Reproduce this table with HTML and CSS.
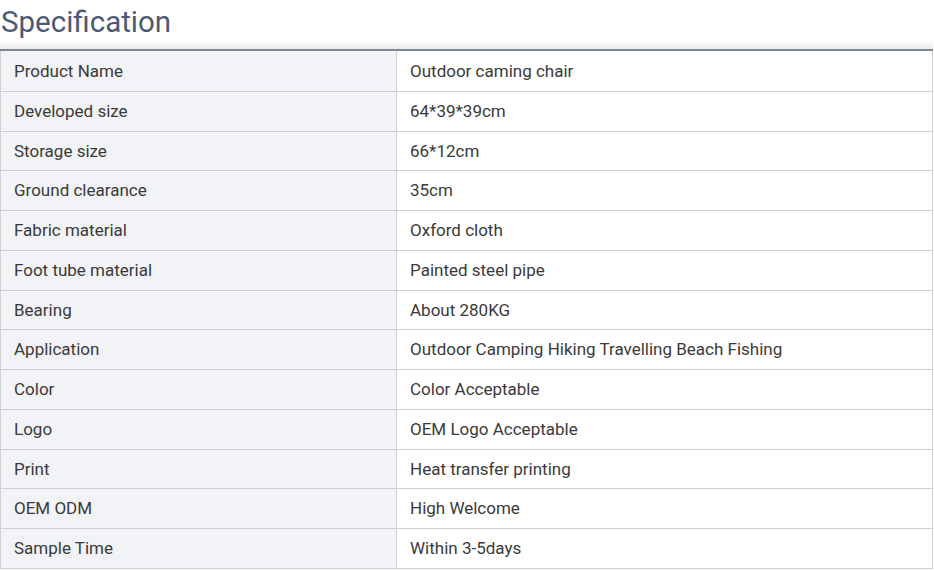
FILE: index.html
```html
<!DOCTYPE html>
<html>
<head>
<meta charset="utf-8">
<link rel="stylesheet" href="styles.css">
</head>
<body>
<div class="spec">
  <h2 class="spec-title">Specification</h2>
  <table class="spec-table">
    <tr><td class="k">Product Name</td><td class="v">Outdoor caming chair</td></tr>
    <tr><td class="k">Developed size</td><td class="v">64*39*39cm</td></tr>
    <tr><td class="k">Storage size</td><td class="v">66*12cm</td></tr>
    <tr><td class="k">Ground clearance</td><td class="v">35cm</td></tr>
    <tr><td class="k">Fabric material</td><td class="v">Oxford cloth</td></tr>
    <tr><td class="k">Foot tube material</td><td class="v">Painted steel pipe</td></tr>
    <tr><td class="k">Bearing</td><td class="v">About 280KG</td></tr>
    <tr><td class="k">Application</td><td class="v">Outdoor Camping Hiking Travelling Beach Fishing</td></tr>
    <tr><td class="k">Color</td><td class="v">Color Acceptable</td></tr>
    <tr><td class="k">Logo</td><td class="v">OEM Logo Acceptable</td></tr>
    <tr><td class="k">Print</td><td class="v">Heat transfer printing</td></tr>
    <tr><td class="k">OEM ODM</td><td class="v">High Welcome</td></tr>
    <tr><td class="k">Sample Time</td><td class="v">Within 3-5days</td></tr>
  </table>
</div>
</body>
</html>
```
FILE: styles.css
```css
html, body {
  margin: 0;
  padding: 0;
  background: #fff;
}
.spec {
  width: 933px;
  font-family: Roboto, "Liberation Sans", sans-serif;
}
.spec-title {
  margin: 0;
  height: 51px;
  box-sizing: border-box;
  padding: 3px 0 0 1px;
  font-size: 29.5px;
  line-height: 38px;
  font-weight: 400;
  color: #4b5a76;
  background: linear-gradient(to bottom, #fff 0px, #fff 40px, #ebebeb 49px);
  border-bottom: 2px solid #7d8796;
}
.spec-table {
  width: 933px;
  border-collapse: collapse;
  font-size: 17px;
  color: #3a3a3a;
}
.spec-table td {
  border: 1px solid #cfcfcf;
  padding: 8px 13px;
  line-height: 22.75px;
  text-align: left;
}
.spec-table tr:first-child td {
  border-top: none;
  padding-top: 9px;
}
.spec-table .k {
  width: 369px;
  background: #f2f3f7;
}
.spec-table .v {
  background: #fff;
}
```
